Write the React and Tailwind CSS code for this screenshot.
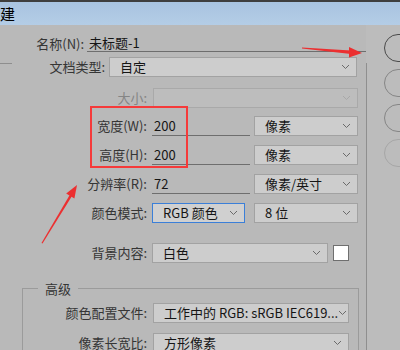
import React from "react";

const Chevron = ({ muted }) => (
  <svg width="9" height="6" viewBox="0 0 9 6" className="shrink-0">
    <polyline
      points="1,1 4.5,4.5 8,1"
      fill="none"
      stroke={muted ? "#a8a8a8" : "#6a6a6a"}
      strokeWidth="1"
    />
  </svg>
);

const Select = ({ value, className = "", blue, disabled }) => (
  <div
    className={`h-[20px] flex items-center justify-between pl-[10px] pr-[6px] border ${
      blue
        ? "border-[#3b7fd8] bg-[#d0d0d0]"
        : disabled
        ? "border-[#a9a9a9] bg-[#bdbdbd]"
        : "border-[#a2a2a2] bg-[#cdcdcd]"
    } ${className}`}
  >
    <span className="text-[#151515] whitespace-nowrap leading-[18px]">{value}</span>
    <Chevron muted={disabled} />
  </div>
);

const Label = ({ children, className = "", muted }) => (
  <div
    className={`text-right whitespace-nowrap leading-[18px] ${
      muted ? "text-[#858585]" : "text-[#353535]"
    } ${className}`}
  >
    {children}
  </div>
);

const Field = ({ value }) => (
  <div className="w-[98px] h-[20px] flex items-center border-b border-[#6e6e6e] pl-[2px] text-[#151515] leading-[18px]">
    {value}
  </div>
);

export default function App() {
  return (
    <div className="relative w-[400px] h-[350px] overflow-hidden bg-[#b9b9b9] font-['Noto_Sans_CJK_SC','Noto_Sans',sans-serif] text-[13px]">
      {/* title bar */}
      <div className="h-[25px] border-t-2 border-[#3e3e3e] bg-gradient-to-b from-[#a8c3e0] to-[#b4cde6] flex items-center overflow-hidden">
        <span className="ml-[-16px] text-[15px] leading-[20px] text-black tracking-[1px]">新建</span>
      </div>

      <div className="flex h-[325px]">
        {/* form */}
        <div className="w-[366px] shrink-0 flex flex-col">
          <div className="flex items-center h-[17px] mt-[10px]">
            <Label className="w-[85px]">名称(N):</Label>
            <div className="ml-[3px] w-[282px] h-[17px] border-b border-[#6e6e6e] pl-[2px] flex items-center text-[#151515] leading-[16px]">
              未标题-1
            </div>
          </div>

          <div className="flex items-center h-[20px] mt-[5px]">
            <div className="w-[12px] h-px bg-[#8e8e8e] self-start mt-[6px]" />
            <Label className="w-[93px]">文档类型:</Label>
            <Select value="自定" className="ml-[4px] w-[248px]" />
          </div>

          <div className="flex items-center h-[20px] mt-[11px]">
            <Label muted className="w-[147px]">大小:</Label>
            <Select value="" disabled className="ml-[6px] w-[205px]" />
          </div>

          <div className="flex items-center h-[20px] mt-[8px]">
            <Label className="w-[147px]">宽度(W):</Label>
            <div className="ml-[5px]">
              <Field value="200" />
            </div>
            <Select value="像素" className="ml-[4px] w-[104px]" />
          </div>

          <div className="flex items-center h-[20px] mt-[9px]">
            <Label className="w-[147px]">高度(H):</Label>
            <div className="ml-[5px]">
              <Field value="200" />
            </div>
            <Select value="像素" className="ml-[4px] w-[104px]" />
          </div>

          <div className="flex items-center h-[20px] mt-[9px]">
            <Label className="w-[147px]">分辨率(R):</Label>
            <div className="ml-[5px]">
              <Field value="72" />
            </div>
            <Select value="像素/英寸" className="ml-[4px] w-[104px]" />
          </div>

          <div className="flex items-center h-[20px] mt-[9px]">
            <Label className="w-[147px]">颜色模式:</Label>
            <Select value="RGB 颜色" blue className="ml-[5px] w-[93px]" />
            <Select value="8 位" className="ml-[9px] w-[104px]" />
          </div>

          <div className="flex items-center h-[20px] mt-[20px]">
            <Label className="w-[147px]">背景内容:</Label>
            <Select value="白色" className="ml-[5px] w-[176px]" />
            <div className="ml-[5px] w-[16px] h-[16px] bg-white border border-[#6f6f6f]" />
          </div>

          {/* advanced group */}
          <div className="mt-[25px] ml-[22px] w-[337px] flex-1 border-l border-r border-[#9b9b9b] flex flex-col">
            <div className="flex items-center h-px">
              <div className="w-[15px] h-px bg-[#9b9b9b]" />
              <span className="px-[7px] text-[#353535] leading-[18px]">高级</span>
              <div className="flex-1 h-px bg-[#9b9b9b]" />
            </div>
            <div className="flex items-center h-[20px] mt-[14px]">
              <Label className="w-[124px]">颜色配置文件:</Label>
              <Select
                value="工作中的 RGB: sRGB IEC619..."
                className="ml-[6px] w-[196px]"
              />
            </div>
            <div className="flex items-center h-[20px] mt-[10px]">
              <Label className="w-[124px]">像素长宽比:</Label>
              <Select value="方形像素" className="ml-[6px] w-[196px]" />
            </div>
          </div>
        </div>

        {/* right column with buttons */}
        <div className="flex-1 flex bg-[#bcbcbc]">
          <div className="w-px bg-[#8f8f8f] mt-[38px]" />
          <div className="ml-[17px] pt-[9px] flex flex-col gap-[7px]">
            <div className="w-[60px] h-[28px] rounded-full border border-[#4a4a4a]" />
            <div className="w-[60px] h-[28px] rounded-full border border-[#858585]" />
            <div className="w-[60px] h-[28px] rounded-full border border-[#858585]" />
            <div className="w-[60px] h-[28px] rounded-full border border-[#a6a6a6]" />
          </div>
        </div>
      </div>

      {/* red annotations */}
      <div className="absolute left-[90px] top-[106px] w-[98px] h-[62px] border-2 border-[#f53a3a] pointer-events-none" />
      <svg
        className="absolute inset-0 pointer-events-none"
        width="400"
        height="350"
        viewBox="0 0 400 350"
      >
        <polygon points="302,47.4 351,50.6 351,54 302,48.6" fill="#ec2f30" />
        <polygon points="349,47 362,53 349,57.5" fill="#ec2f30" />
        <polygon points="41.5,243 70,194.5 72,196 42.5,243.5" fill="#ec2f30" />
        <polygon points="77,185 74.4,198.6 66.2,193.6" fill="#ec2f30" />
      </svg>
    </div>
  );
}
